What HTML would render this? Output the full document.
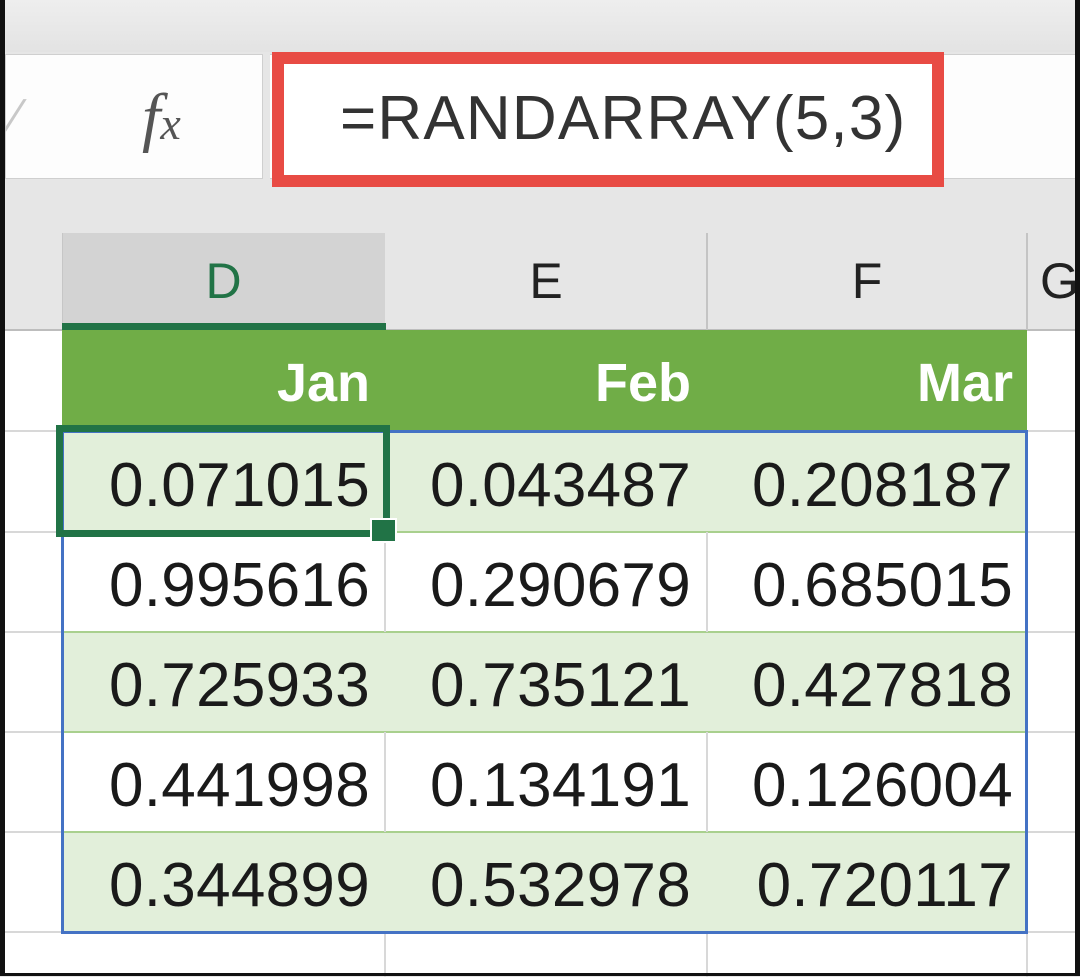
<!DOCTYPE html>
<html><head><style>
*{margin:0;padding:0;box-sizing:border-box}
body{width:1080px;height:976px;position:relative;overflow:hidden;background:#e6e6e6;font-family:"Liberation Sans",sans-serif}
.a{position:absolute}
.num{position:absolute;font-size:62px;color:#1a1a1a;text-align:right;line-height:100px;letter-spacing:0.3px}
.hdr{position:absolute;font-size:54px;font-weight:bold;color:#fff;text-align:right;line-height:98px}
.col{position:absolute;font-size:50px;text-align:center;line-height:96px;top:233px}
</style></head><body>
<div class="a" style="left:0;top:0;width:1080px;height:52px;background:linear-gradient(#eeeeee,#e3e3e3)"></div>
<div class="a" style="left:5px;top:54px;width:258px;height:125px;background:#fdfdfd;border:1px solid #cfcfcf"></div>
<div class="a" style="left:8px;top:92px;font-size:44px;color:#c8c8c8;transform:skewX(-20deg)">/</div>
<div class="a" style="left:142px;top:78px;font-family:'Liberation Serif',serif;font-style:italic;font-size:66px;color:#555;line-height:80px">f<span style="font-size:46px">x</span></div>
<div class="a" style="left:270px;top:54px;width:810px;height:125px;background:#fdfdfd;border-top:1px solid #cfcfcf;border-bottom:1px solid #cfcfcf"></div>
<div class="a" style="left:272px;top:52px;width:672px;height:135px;border:12px solid #e84b44;background:#fff"></div>
<div class="a" style="left:340px;top:82px;font-size:62px;color:#333;line-height:74px;letter-spacing:1.2px">=RANDARRAY(5,3)</div>
<div class="a" style="left:0;top:329px;width:1080px;height:2px;background:#bdbdbd"></div>
<div class="a" style="left:62px;top:233px;width:323px;height:97px;background:#d3d3d3;border-left:1px solid #c6c6c6"></div>
<div class="a" style="left:62px;top:323px;width:324px;height:7px;background:#217346"></div>
<div class="a" style="left:706px;top:233px;width:2px;height:97px;background:#c4c4c4"></div>
<div class="a" style="left:1026px;top:233px;width:2px;height:97px;background:#c4c4c4"></div>
<div class="col" style="left:62px;width:323px;color:#217346">D</div>
<div class="col" style="left:385px;width:322px;color:#222">E</div>
<div class="col" style="left:707px;width:320px;color:#222">F</div>
<div class="col" style="left:1040px;width:60px;color:#222;text-align:left">G</div>
<div class="a" style="left:5px;top:331px;width:1070px;height:642px;background:#fff"></div>
<div class="a" style="left:5px;top:430px;width:1070px;height:2px;background:#d8d8d8"></div>
<div class="a" style="left:5px;top:531px;width:1070px;height:2px;background:#d8d8d8"></div>
<div class="a" style="left:5px;top:631px;width:1070px;height:2px;background:#d8d8d8"></div>
<div class="a" style="left:5px;top:731px;width:1070px;height:2px;background:#d8d8d8"></div>
<div class="a" style="left:5px;top:831px;width:1070px;height:2px;background:#d8d8d8"></div>
<div class="a" style="left:5px;top:931px;width:1070px;height:2px;background:#d8d8d8"></div>
<div class="a" style="left:384px;top:932px;width:2px;height:45px;background:#d8d8d8"></div>
<div class="a" style="left:706px;top:932px;width:2px;height:45px;background:#d8d8d8"></div>
<div class="a" style="left:1026px;top:932px;width:2px;height:45px;background:#d8d8d8"></div>
<div class="a" style="left:62px;top:330px;width:965px;height:100px;background:#70ad47"></div>
<div class="hdr" style="left:62px;top:334px;width:308px">Jan</div>
<div class="hdr" style="left:385px;top:334px;width:306px">Feb</div>
<div class="hdr" style="left:707px;top:334px;width:306px">Mar</div>
<div class="a" style="left:62px;top:430px;width:965px;height:102px;background:#e2efda"></div>
<div class="a" style="left:62px;top:632px;width:965px;height:100px;background:#e2efda"></div>
<div class="a" style="left:62px;top:832px;width:965px;height:100px;background:#e2efda"></div>
<div class="a" style="left:62px;top:531px;width:965px;height:2px;background:#a9d08e"></div>
<div class="a" style="left:62px;top:631px;width:965px;height:2px;background:#a9d08e"></div>
<div class="a" style="left:62px;top:731px;width:965px;height:2px;background:#a9d08e"></div>
<div class="a" style="left:62px;top:831px;width:965px;height:2px;background:#a9d08e"></div>
<div class="a" style="left:384px;top:532px;width:2px;height:100px;background:#d8d8d8"></div>
<div class="a" style="left:706px;top:532px;width:2px;height:100px;background:#d8d8d8"></div>
<div class="a" style="left:384px;top:732px;width:2px;height:100px;background:#d8d8d8"></div>
<div class="a" style="left:706px;top:732px;width:2px;height:100px;background:#d8d8d8"></div>
<div class="a" style="left:61px;top:430px;width:967px;height:504px;border:3px solid #4472c4"></div>
<div class="num" style="left:62px;top:436px;width:308px">0.071015</div>
<div class="num" style="left:385px;top:436px;width:306px">0.043487</div>
<div class="num" style="left:707px;top:436px;width:306px">0.208187</div>
<div class="num" style="left:62px;top:536px;width:308px">0.995616</div>
<div class="num" style="left:385px;top:536px;width:306px">0.290679</div>
<div class="num" style="left:707px;top:536px;width:306px">0.685015</div>
<div class="num" style="left:62px;top:636px;width:308px">0.725933</div>
<div class="num" style="left:385px;top:636px;width:306px">0.735121</div>
<div class="num" style="left:707px;top:636px;width:306px">0.427818</div>
<div class="num" style="left:62px;top:736px;width:308px">0.441998</div>
<div class="num" style="left:385px;top:736px;width:306px">0.134191</div>
<div class="num" style="left:707px;top:736px;width:306px">0.126004</div>
<div class="num" style="left:62px;top:836px;width:308px">0.344899</div>
<div class="num" style="left:385px;top:836px;width:306px">0.532978</div>
<div class="num" style="left:707px;top:836px;width:306px">0.720117</div>
<div class="a" style="left:56px;top:425px;width:334px;height:112px;border:7px solid #217346"></div>
<div class="a" style="left:370px;top:518px;width:27px;height:25px;background:#217346;border:2px solid #fff"></div>
<div class="a" style="left:0;top:0;width:5px;height:976px;background:#111"></div>
<div class="a" style="left:1075px;top:0;width:5px;height:976px;background:#111"></div>
<div class="a" style="left:0;top:973px;width:1080px;height:3px;background:#111"></div>
</body></html>
